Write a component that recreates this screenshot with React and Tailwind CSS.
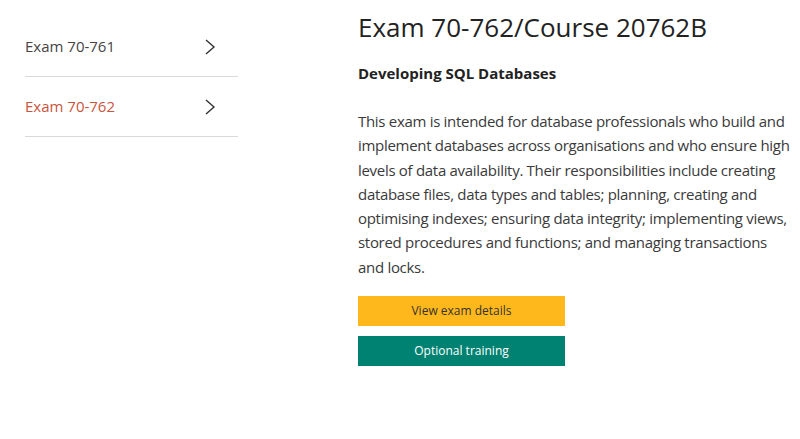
import React from "react";

function Chevron() {
  return (
    <svg width="12" height="18" viewBox="0 0 12 18" fill="none" stroke="#333" strokeWidth="1.4">
      <path d="M2 2 L10 9 L2 16" />
    </svg>
  );
}

const lines = [
  "This exam is intended for database professionals who build and",
  "implement databases across organisations and who ensure high",
  "levels of data availability. Their responsibilities include creating",
  "database files, data types and tables; planning, creating and",
  "optimising indexes; ensuring data integrity; implementing views,",
  "stored procedures and functions; and managing transactions",
  "and locks.",
];

export default function App() {
  const font = { fontFamily: '"Open Sans", "Noto Sans", sans-serif' };
  return (
    <div className="w-[800px] h-[439px] bg-white flex" style={font}>
      <div className="w-[238px] pl-[25px] pt-[17px] flex flex-col">
        <div className="h-[60px] flex items-center justify-between border-b border-[#d9d9d9] pr-[22px]">
          <span className="text-[15px] text-[#444]">Exam 70-761</span>
          <Chevron />
        </div>
        <div className="h-[60px] flex items-center justify-between border-b border-[#d9d9d9] pr-[22px]">
          <span className="text-[15px] text-[#c8553d]">Exam 70-762</span>
          <Chevron />
        </div>
      </div>
      <div className="ml-[120px] flex flex-col">
        <h1 className="text-[26px] text-[#222] leading-[36px] mt-[9px]">Exam 70-762/Course 20762B</h1>
        <h2 className="text-[15px] font-bold text-[#222] mt-[17px] leading-[22px]">Developing SQL Databases</h2>
        <p className="text-[15px] text-[#3a3a3a] leading-[24.3px] tracking-[-0.3px] w-[440px] mt-[25px] whitespace-nowrap">
          {lines.map((l, i) => (
            <span key={i} className="block">{l}</span>
          ))}
        </p>
        <div className="mt-[17px] w-[207px] h-[30px] bg-[#ffb81c] flex items-center justify-center text-[12px] text-[#333]">View exam details</div>
        <div className="mt-[10px] w-[207px] h-[30px] bg-[#008272] flex items-center justify-center text-[12px] text-white">Optional training</div>
      </div>
    </div>
  );
}
